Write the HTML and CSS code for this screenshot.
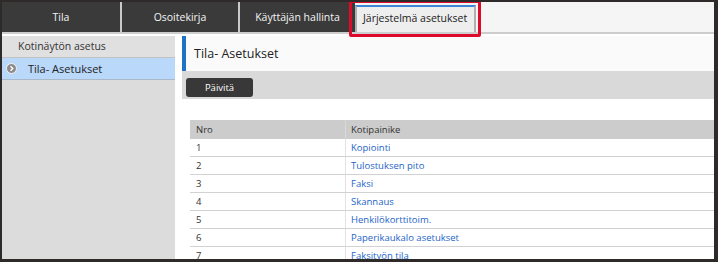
FILE: index.html
```html
<!DOCTYPE html>
<html lang="fi">
<head>
  <meta charset="UTF-8">
  <title>Järjestelmä asetukset</title>
  <link rel="stylesheet" href="styles.css">
</head>
<body>
  <div class="frame">
    <div class="tabbar">
      <div class="tab tab-1">Tila</div>
      <div class="tab tab-2">Osoitekirja</div>
      <div class="tab tab-3">Käyttäjän hallinta</div>
      <div class="tab-active">Järjestelmä asetukset</div>
      <div class="highlight"></div>
    </div>

    <div class="content">
      <div class="sidebar">
        <div class="side-head">Kotinäytön asetus</div>
        <div class="side-item">
          <svg class="side-icon" width="11" height="11" viewBox="0 0 11 11">
            <circle cx="5.5" cy="5.5" r="5" fill="#8c8c8c" stroke="#f2f2f2" stroke-width="1"/>
            <path d="M4.5 3.2 L6.8 5.5 L4.5 7.8" fill="none" stroke="#fff" stroke-width="1.4"/>
          </svg>
          Tila- Asetukset
        </div>
      </div>

      <div class="main">
        <div class="page-title">Tila- Asetukset</div>
        <div class="toolbar">
          <button class="btn">Päivitä</button>
        </div>

        <table class="list">
          <thead>
            <tr><th class="col-nro">Nro</th><th>Kotipainike</th></tr>
          </thead>
          <tbody>
            <tr><td>1</td><td><a href="#">Kopiointi</a></td></tr>
            <tr><td>2</td><td><a href="#">Tulostuksen pito</a></td></tr>
            <tr><td>3</td><td><a href="#">Faksi</a></td></tr>
            <tr><td>4</td><td><a href="#">Skannaus</a></td></tr>
            <tr><td>5</td><td><a href="#">Henkilökorttitoim.</a></td></tr>
            <tr><td>6</td><td><a href="#">Paperikaukalo asetukset</a></td></tr>
            <tr><td>7</td><td><a href="#">Faksityön tila</a></td></tr>
          </tbody>
        </table>
      </div>
    </div>
  </div>
</body>
</html>
```

FILE: styles.css
```css
html, body {
  margin: 0;
  padding: 0;
}

body {
  font-family: "Open Sans", "Noto Sans", Arial, sans-serif;
  color: #333;
  background: #fff;
}

.frame {
  width: 718px;
  height: 262px;
  box-sizing: border-box;
  border-top: 2px solid #2e2a29;
  border-left: 2px solid #2e2a29;
  border-right: 4px solid #2e2a29;
  border-bottom: 3px solid #2e2a29;
  display: flex;
  flex-direction: column;
  overflow: hidden;
}

.tabbar {
  position: relative;
  display: flex;
  height: 30px;
  background: #f5f5f5;
  border-bottom: 2px solid #cdcdcd;
  flex-shrink: 0;
}

.tab {
  background: #3a3a3a;
  color: #f4f4f4;
  font-size: 10.5px;
  line-height: 30px;
  text-align: center;
  box-sizing: border-box;
}

.tab-1 { width: 120px; border-right: 2px solid #c9c9c9; }
.tab-2 { width: 118px; border-right: 2px solid #c9c9c9; }
.tab-3 { width: 115px; }

.tab-active {
  margin-top: 3px;
  width: 121px;
  box-sizing: border-box;
  background: #eeeeee;
  border-top: 2px solid #3d86d6;
  border-left: 2px solid #b0b0b0;
  border-right: 2px solid #b0b0b0;
  font-size: 10.5px;
  line-height: 22px;
  padding-left: 6px;
  color: #222;
}

/* red annotation box round the active tab */
.highlight {
  position: absolute;
  left: 347px;
  top: -2px;
  width: 132px;
  height: 37px;
  box-sizing: border-box;
  border: 3px solid #dd0a2c;
  border-radius: 2px;
}

.content {
  flex: 1;
  display: flex;
  padding-top: 2px;
  min-height: 0;
}

.sidebar {
  width: 173px;
  flex-shrink: 0;
  background: #dcdcdc;
}

.side-head {
  height: 21px;
  line-height: 21px;
  background: #e0e0e0;
  border-bottom: 1px solid #c2c2c2;
  padding-left: 16px;
  font-size: 10.5px;
  color: #333;
}

.side-item {
  display: flex;
  align-items: center;
  height: 21px;
  background: #b9d8fa;
  border-bottom: 1px solid #a9b9c9;
  padding-left: 4px;
  font-size: 11px;
  color: #222;
}

.side-icon {
  margin-right: 11px;
}

.main {
  flex: 1;
  padding-left: 7px;
  overflow: hidden;
  background: #fff;
}

.page-title {
  height: 35px;
  line-height: 35px;
  background: #fafafa;
  border-left: 4px solid #1f72c4;
  padding-left: 8px;
  font-size: 12.5px;
  color: #222;
}

.toolbar {
  height: 28px;
  background: #d9d9d9;
  padding: 3px 4px;
  box-sizing: border-box;
}

.btn {
  width: 67px;
  height: 19px;
  background: #383838;
  color: #fff;
  border: none;
  border-radius: 3px;
  font-family: inherit;
  font-size: 9.5px;
  padding: 0;
}

.list {
  margin-top: 21px;
  margin-left: 8px;
  width: 560px;
  border-collapse: collapse;
  table-layout: fixed;
  font-size: 9.5px;
}

.list th {
  height: 19px;
  background: #cccccc;
  text-align: left;
  font-weight: normal;
  color: #333;
  padding: 0 5px;
}

.list th.col-nro {
  width: 144px;
  padding-left: 6px;
  border-right: 1px solid #dadada;
}

.list td {
  height: 17px;
  padding: 0 5px;
  border-bottom: 1px solid #d2d2d2;
  color: #333;
}

.list td:first-child {
  padding-left: 6px;
  border-right: 1px solid #e2e2e2;
}

.list a {
  color: #1e64c8;
  text-decoration: none;
}
```
